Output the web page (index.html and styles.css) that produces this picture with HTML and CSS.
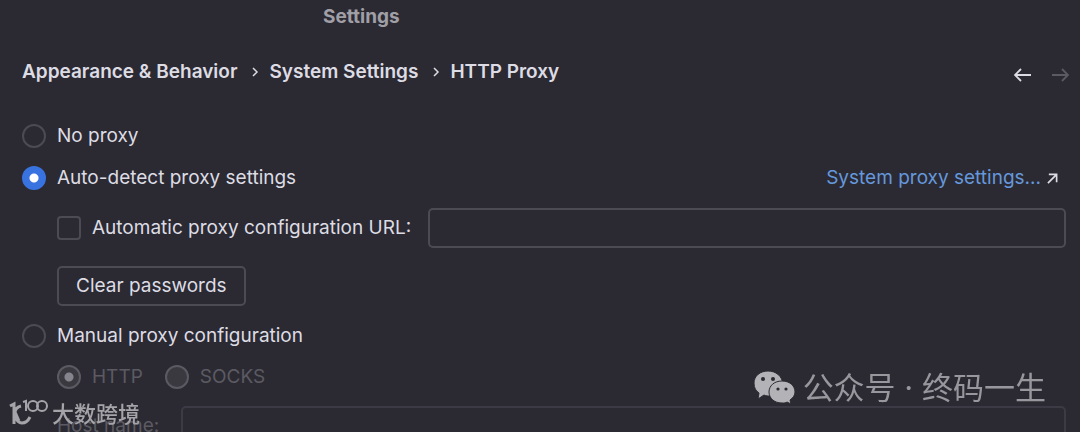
FILE: index.html
```
<!DOCTYPE html>
<html lang="en">
<head>
    <meta charset="UTF-8">
    <meta name="viewport" content="width=device-width, initial-scale=1.0">
    <title>Settings</title>
    <link rel="stylesheet" href="styles.css">
</head>
<body>
    <header class="titlebar">
        <h1>Settings</h1>
    </header>

    <div class="toolbar">
        <nav class="breadcrumbs" aria-label="Breadcrumb">
            <a href="#appearance">Appearance &amp; Behavior</a>
            <svg class="chevron" viewBox="0 0 8 12"><path d="M2 2l4 4-4 4"/></svg>
            <a href="#system">System Settings</a>
            <svg class="chevron" viewBox="0 0 8 12"><path d="M2 2l4 4-4 4"/></svg>
            <a href="#proxy">HTTP Proxy</a>
        </nav>
        <div class="history">
            <button type="button" class="history-btn" aria-label="Back">
                <svg viewBox="0 0 18 14"><path d="M17 7H1M7 1L1 7l6 6"/></svg>
            </button>
            <button type="button" class="history-btn" aria-label="Forward" disabled>
                <svg viewBox="0 0 18 14"><path d="M1 7h16M11 1l6 6-6 6"/></svg>
            </button>
        </div>
    </div>

    <form class="proxy-form">
        <div class="row">
            <input type="radio" name="mode" id="no-proxy">
            <label for="no-proxy">No proxy</label>
        </div>
        <div class="row">
            <input type="radio" name="mode" id="auto-proxy" checked>
            <label for="auto-proxy">Auto-detect proxy settings</label>
            <a href="#system-proxy" class="system-link">System proxy settings...
                <svg viewBox="0 0 12 12"><path d="M1 11L10 2M2 1.500h8.500V10"/></svg>
            </a>
        </div>
        <div class="row indent">
            <input type="checkbox" id="use-url">
            <label for="use-url">Automatic proxy configuration URL:</label>
            <input type="text" class="field url-field" aria-label="Configuration URL">
        </div>
        <div class="row indent">
            <button type="button" class="clear-btn">Clear passwords</button>
        </div>

        <div class="manual">
            <div class="row">
                <input type="radio" name="mode" id="manual-proxy">
                <label for="manual-proxy">Manual proxy configuration</label>
            </div>
            <div class="row indent disabled">
                <input type="radio" name="protocol" id="http" checked disabled>
                <label for="http">HTTP</label>
                <input type="radio" name="protocol" id="socks" class="socks" disabled>
                <label for="socks">SOCKS</label>
            </div>
            <div class="row indent disabled">
                <label for="host" class="host-label">Host name:</label>
                <input type="text" id="host" class="field" disabled>
            </div>
        </div>
    </form>

    <div class="mark mark-left">
        <svg viewBox="0 0 40 28">
            <path class="thick" d="M1 8l4-2v20M12 8c-4 1-6 3-6 7 0 6 3 10 7 10 3 0 6-2 8-6M6 14l4 9"/>
            <path class="thin" d="M14 4l3-1v10"/>
            <circle class="thin" cx="24" cy="8" r="5"/>
            <circle class="thin" cx="33" cy="8" r="5"/>
        </svg>
        <span>大数跨境</span>
    </div>
    <div class="mark mark-right">
        <svg viewBox="0 0 42 34">
            <path d="M15 0C7 0 1 5 1 12c0 5 2 8 5 10l-1 6 6-4c2 1 4 1 6 1h8l5-12C29 5 23 0 15 0z"/>
            <path d="M29 10c-8 0-13 5-13 11s5 11 13 11c2 0 4 0 5-1l4 2-1-4c3-2 5-5 5-8 0-6-5-11-13-11z"/>
            <g class="eyes">
                <circle cx="10" cy="8" r="2"/>
                <circle cx="20" cy="8" r="2"/>
                <circle cx="25" cy="18" r="1.600"/>
                <circle cx="33" cy="18" r="1.600"/>
            </g>
        </svg>
        <span>公众号 · 终码一生</span>
    </div>
</body>
</html>
```
FILE: styles.css
```
:root {
    --background: #2b2a32;
    --text: #dddce4;
    --muted: #a09fa7;
    --border: #4c4b54;
    --disabled: #5b5a63;
    --accent: #3873e0;
    --link: #6598dc;
}

* {
    box-sizing: border-box;
    margin: 0;
    padding: 0;
}

body {
    height: 100vh;
    overflow: hidden;
    padding: 0 14px 0 22px;
    background: var(--background);
    color: var(--text);
    font-family: Inter, "Noto Sans CJK SC", sans-serif;
    font-size: 19px;
    line-height: 24px;
}

a {
    color: inherit;
    text-decoration: none;
}

svg {
    fill: none;
    stroke: currentColor;
}

.titlebar {
    width: 65%;
    padding: 5px 0;
    text-align: center;
}

h1 {
    font-size: 19px;
    font-weight: 700;
    color: var(--muted);
}

.toolbar {
    display: flex;
    align-items: center;
    justify-content: space-between;
    height: 36px;
    margin: 20px 0 34px;
}

.breadcrumbs {
    display: flex;
    align-items: center;
    font-weight: 600;
}

.chevron {
    width: 8px;
    height: 12px;
    margin: 0 10px 0 14px;
    stroke-width: 1.5;
}

.history {
    display: flex;
    gap: 19px;
    margin-right: -3px;
    padding-top: 6px;
}

.history-btn {
    display: flex;
    border: none;
    background: none;
    color: var(--text);
}

.history-btn:disabled {
    color: var(--disabled);
}

.history-btn svg {
    width: 18px;
    height: 14px;
    stroke-width: 1.8;
}

.proxy-form {
    display: flex;
    flex-direction: column;
    gap: 18px;
}

.manual {
    display: flex;
    flex-direction: column;
    gap: 17px;
}

.row {
    display: flex;
    align-items: center;
}

.indent {
    padding-left: 35px;
}

input[type="radio"],
input[type="checkbox"] {
    appearance: none;
    flex: none;
    width: 24px;
    height: 24px;
    margin-right: 11px;
    border: 2px solid var(--border);
    border-radius: 50%;
}

input[type="checkbox"] {
    border-radius: 4px;
}

input[type="radio"]:checked {
    border-color: var(--accent);
    background: radial-gradient(circle, #fff 4px, var(--accent) 5px);
}

.disabled {
    color: var(--disabled);
}

.disabled input[type="radio"] {
    border-color: var(--disabled);
    background: #3a3940;
}

.disabled input[type="radio"]:checked {
    background: radial-gradient(circle, #85848d 4px, #3a3940 5px);
}

.disabled .socks {
    margin-left: 22px;
}

.system-link {
    display: flex;
    align-items: center;
    gap: 6px;
    margin-left: auto;
    margin-right: 8px;
    color: var(--link);
}

.system-link svg {
    width: 11px;
    height: 11px;
    stroke: var(--text);
    stroke-width: 1.8;
}

.field {
    flex: 1;
    min-width: 0;
    height: 40px;
    padding: 0 10px;
    border: 2px solid var(--border);
    border-radius: 5px;
    background: transparent;
    color: var(--text);
    font: inherit;
}

.disabled .field {
    border-color: #3c3b45;
}

.url-field {
    margin-left: 17px;
}

.clear-btn {
    height: 40px;
    padding: 0 17px;
    border: 2px solid var(--border);
    border-radius: 5px;
    background: transparent;
    color: var(--text);
    font: inherit;
}

.host-label {
    margin-right: 22px;
}

.mark {
    position: fixed;
    display: flex;
    align-items: center;
}

.mark-left {
    left: 9px;
    bottom: 6px;
    align-items: flex-end;
    gap: 3px;
    color: #a5a4a9;
    font-size: 22px;
    font-weight: 500;
}

.mark-left svg {
    width: 40px;
    height: 28px;
}

.thick {
    stroke-width: 3;
}

.thin {
    stroke-width: 2;
}

.mark-right {
    right: 34px;
    bottom: 26px;
    gap: 8px;
    color: #98979d;
    font-size: 31px;
    font-weight: 400;
    line-height: 36px;
}

.mark-right svg {
    width: 42px;
    height: 34px;
    fill: #b3b2b6;
    stroke: var(--background);
    stroke-width: 1;
}

.mark-right .eyes {
    fill: var(--background);
    stroke: none;
}
```
